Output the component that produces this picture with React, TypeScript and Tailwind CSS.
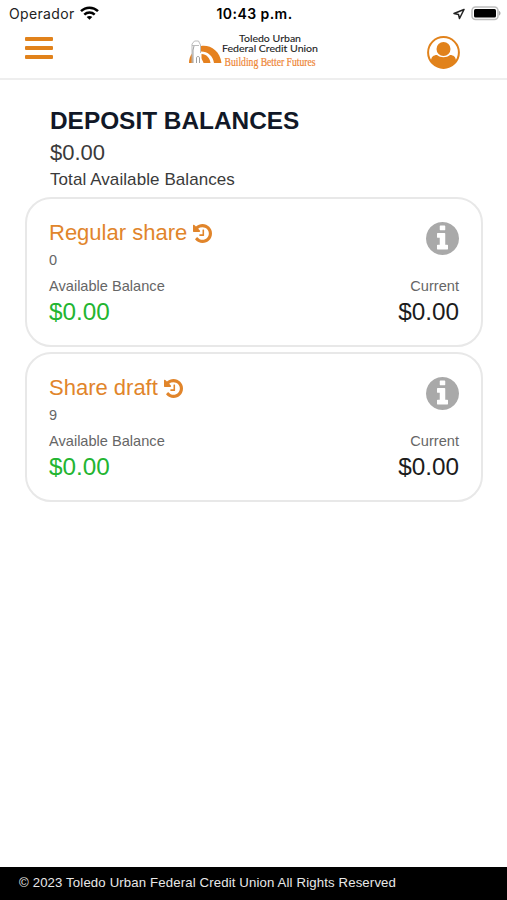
import React from 'react';

interface Account {
  name: string;
  suffix: string;
  available: string;
  current: string;
}

const accounts: Account[] = [
  { name: 'Regular share', suffix: '0', available: '$0.00', current: '$0.00' },
  { name: 'Share draft', suffix: '9', available: '$0.00', current: '$0.00' },
];

function HistoryIcon() {
  return (
    <svg className="h-[19px] w-[19px]" viewBox="0 -128 1536 1536" fill="currentColor">
      <path d="M1536 640q0 156-61 298t-164 245-245 164-298 61q-172 0-327-72.5t-264-204.5q-7-10-6.5-22.5t8.5-20.5l137-138q10-9 25-9 16 2 23 12 73 95 179 147t225 52q104 0 198.500-40.500t163.500-109.500 109.500-163.500 40.500-198.500-40.500-198.500-109.500-163.500-163.500-109.500-198.500-40.500q-98 0-188 35.500t-160 101.500l137 138q31 30 14 69-17 40-59 40h-448q-26 0-45-19t-19-45v-448q0-42 40-59 39-17 69 14l130 129q107-101 244.500-156.500t284.500-55.500q156 0 298 61t245 164 164 245 61 298zm-640-288v448q0 14-9 23t-23 9h-320q-14 0-23-9t-9-23v-64q0-14 9-23t23-9h224v-352q0-14 9-23t23-9h64q14 0 23 9t9 23z" />
    </svg>
  );
}

function InfoIcon() {
  return (
    <svg className="mt-[2px] h-[33px] w-[33px] text-[#a9a9a9]" viewBox="128 128 1536 1536" fill="currentColor">
      <path d="M1152 1376v-160q0-14-9-23t-23-9h-96v-512q0-14-9-23t-23-9h-320q-14 0-23 9t-9 23v160q0 14 9 23t23 9h96v320h-96q-14 0-23 9t-9 23v160q0 14 9 23t23 9h448q14 0 23-9t9-23zm-128-896v-160q0-14-9-23t-23-9h-192q-14 0-23 9t-9 23v160q0 14 9 23t23 9h192q14 0 23-9t9-23zm640 416q0 209-103 385.500t-279.500 279.500-385.500 103-385.500-103-279.500-279.500-103-385.500 103-385.500 279.500-279.500 385.500-103 385.500 103 279.500 279.500 103 385.500z" />
    </svg>
  );
}

function StatusBar() {
  return (
    <div className="grid h-[27px] grid-cols-3 items-center pl-[9px] pr-[7px] font-['Inter',sans-serif] text-[#222]">
      <div className="flex items-center gap-[5px]">
        <span className="text-[14px] leading-none tracking-[0.35px]">Operador</span>
        <svg className="-mt-[1px] h-[14px] w-[19px]" viewBox="0 0 19 14" fill="none" stroke="#000" strokeWidth="2.5">
          <path d="M1 5.2C5.8.5 13.2.5 18 5.2" />
          <path d="M4.3 8.6c3-2.800 7.400-2.800 10.400 0" />
          <path d="M9.500 13.800 6.700 11c1.600-1.400 4-1.400 5.600 0z" fill="#000" stroke="none" />
        </svg>
      </div>
      <span className="text-center text-[14px] font-semibold leading-none tracking-[0.45px] text-black">
        10:43 p.m.
      </span>
      <div className="flex items-center justify-end gap-[6px]">
        <svg className="h-3 w-3" viewBox="0 0 12 12" fill="none" stroke="#222" strokeWidth="1.5" strokeLinejoin="round">
          <path d="M11 1.500 1 5.500l4.500 1 1 4z" />
        </svg>
        <svg className="-mr-[1px] h-[15px] w-[30px]" viewBox="0 0 30 15">
          <rect x="1" y="1" width="26" height="12.500" rx="3.500" fill="#fff" stroke="#bdbdbd" strokeWidth="1.500" />
          <rect x="3" y="3" width="22" height="8.500" rx="1.500" fill="#000" />
          <path d="M28 5v4.500c2-.7 2-3.800 0-4.500" fill="#aaa" />
        </svg>
      </div>
    </div>
  );
}

function Logo() {
  return (
    <div className="flex h-[36px] w-[132px]">
      <svg className="h-[36px] w-[34px] shrink-0" viewBox="0 0 34 36">
        <path d="M13 13c9-1.500 19 4.500 20.500 17H26C25 23 20 18.500 13 18.500z" fill="#e5811f" />
        <path d="M13.500 21c5 0 8.500 4 9 9h-7c-.2-2-2-3-2-5z" fill="#e5811f" />
        <path d="M1 30c0-4 1-7 3-9.500L4.500 30z" fill="#e5811f" />
        <path d="M4 30V11l2.500-3h4l2 4v8M4 12.500h7" fill="none" stroke="#b5b5b5" strokeWidth=".9" />
        <path d="M5 30V17l1-4M8.500 30v-5c0-2 3-2 3 0v5" fill="none" stroke="#888" strokeWidth=".8" />
      </svg>
      <svg className="h-[36px] w-[98px] shrink-0 overflow-visible" viewBox="34 0 98 36">
        <g fill="#222" stroke="#222" strokeWidth=".1" fontFamily="Lato, sans-serif" fontSize="9">
          <text x="51" y="8.500" textLength="62" lengthAdjust="spacingAndGlyphs">Toledo Urban</text>
          <text x="34" y="19" textLength="96" lengthAdjust="spacingAndGlyphs">Federal Credit Union</text>
        </g>
        <text
          x="36.5"
          y="32.500"
          fill="#ee8433"
          stroke="#ee8433"
          strokeWidth=".2"
          fontFamily="'Liberation Serif', serif"
          fontSize="11.5"
          textLength="91"
          lengthAdjust="spacingAndGlyphs"
        >
          Building Better Futures
        </text>
      </svg>
    </div>
  );
}

function NavBar() {
  return (
    <div className="flex h-[53px] items-start justify-between border-b-2 border-[#eee] pl-[25px] pr-[47px]">
      <button className="mt-[9.5px] flex flex-col gap-[4.5px]" aria-label="Menu">
        <span className="h-[4.5px] w-7 rounded-[1px] bg-[#e1821b]" />
        <span className="h-[4.5px] w-7 rounded-[1px] bg-[#e1821b]" />
        <span className="h-[4.5px] w-7 rounded-[1px] bg-[#e1821b]" />
      </button>
      <div className="ml-[28px] mt-[6px]">
        <Logo />
      </div>
      <button className="mt-[9px]" aria-label="Profile">
        <svg className="h-[33px] w-[33px]" viewBox="0 0 33 33">
          <circle cx="16.500" cy="16.500" r="15.400" fill="#fff" stroke="#e1821b" strokeWidth="2" />
          <circle cx="16.500" cy="13" r="7" fill="#e1821b" />
          <path d="M4 25c0-4 2.500-6 6-6 3.500 3 9.500 3 13 0 3.500 0 6 2 6 6-6 9.500-19 9.500-25 0z" fill="#e1821b" />
        </svg>
      </button>
    </div>
  );
}

function AccountCard({ account }: { account: Account }) {
  return (
    <div className="h-[150px] rounded-[26px] border-2 border-[#e8e8e8] px-[22px] pt-[21px]">
      <div className="flex items-start justify-between">
        <div>
          <div className="flex items-center gap-[6px] text-[#e1852b]">
            <h2 className="text-[22px] leading-[26px]">{account.name}</h2>
            <HistoryIcon />
          </div>
          <p className="mt-[6px] text-[14.5px] leading-4 text-[#666]">{account.suffix}</p>
        </div>
        <InfoIcon />
      </div>
      <div className="mt-[9px] flex justify-between text-[14.6px] leading-[18px] text-[#666]">
        <span>Available Balance</span>
        <span>Current</span>
      </div>
      <div className="mt-[3px] flex justify-between text-[24.3px] leading-[28px]">
        <span className="text-[#23b531]">{account.available}</span>
        <span className="text-[#1c1c1c]">{account.current}</span>
      </div>
    </div>
  );
}

export default function App() {
  return (
    <div className="flex h-screen flex-col bg-white font-['Liberation_Sans',sans-serif]">
      <StatusBar />
      <NavBar />

      <main className="flex-1 pl-[25px] pr-[24px] pt-[26px]">
        <div className="pl-[25px] text-[#3a3a3a]">
          <h1 className="text-[24.4px] font-bold leading-[30px] text-[#111827]">DEPOSIT BALANCES</h1>
          <p className="mt-[3px] text-[22px] leading-[28px]">$0.00</p>
          <p className="mt-[3px] text-[17px] leading-[20px] tracking-[0.08px]">Total Available Balances</p>
        </div>
        <div className="mt-[7px] flex flex-col gap-[5px]">
          {accounts.map((account) => (
            <AccountCard key={account.name} account={account} />
          ))}
        </div>
      </main>

      <footer className="flex h-[33px] items-center bg-black pb-[2px] pl-[19px] text-[13.2px] tracking-[0.14px] text-[#e8e8e8]">
        © 2023 Toledo Urban Federal Credit Union All Rights Reserved
      </footer>
    </div>
  );
}
